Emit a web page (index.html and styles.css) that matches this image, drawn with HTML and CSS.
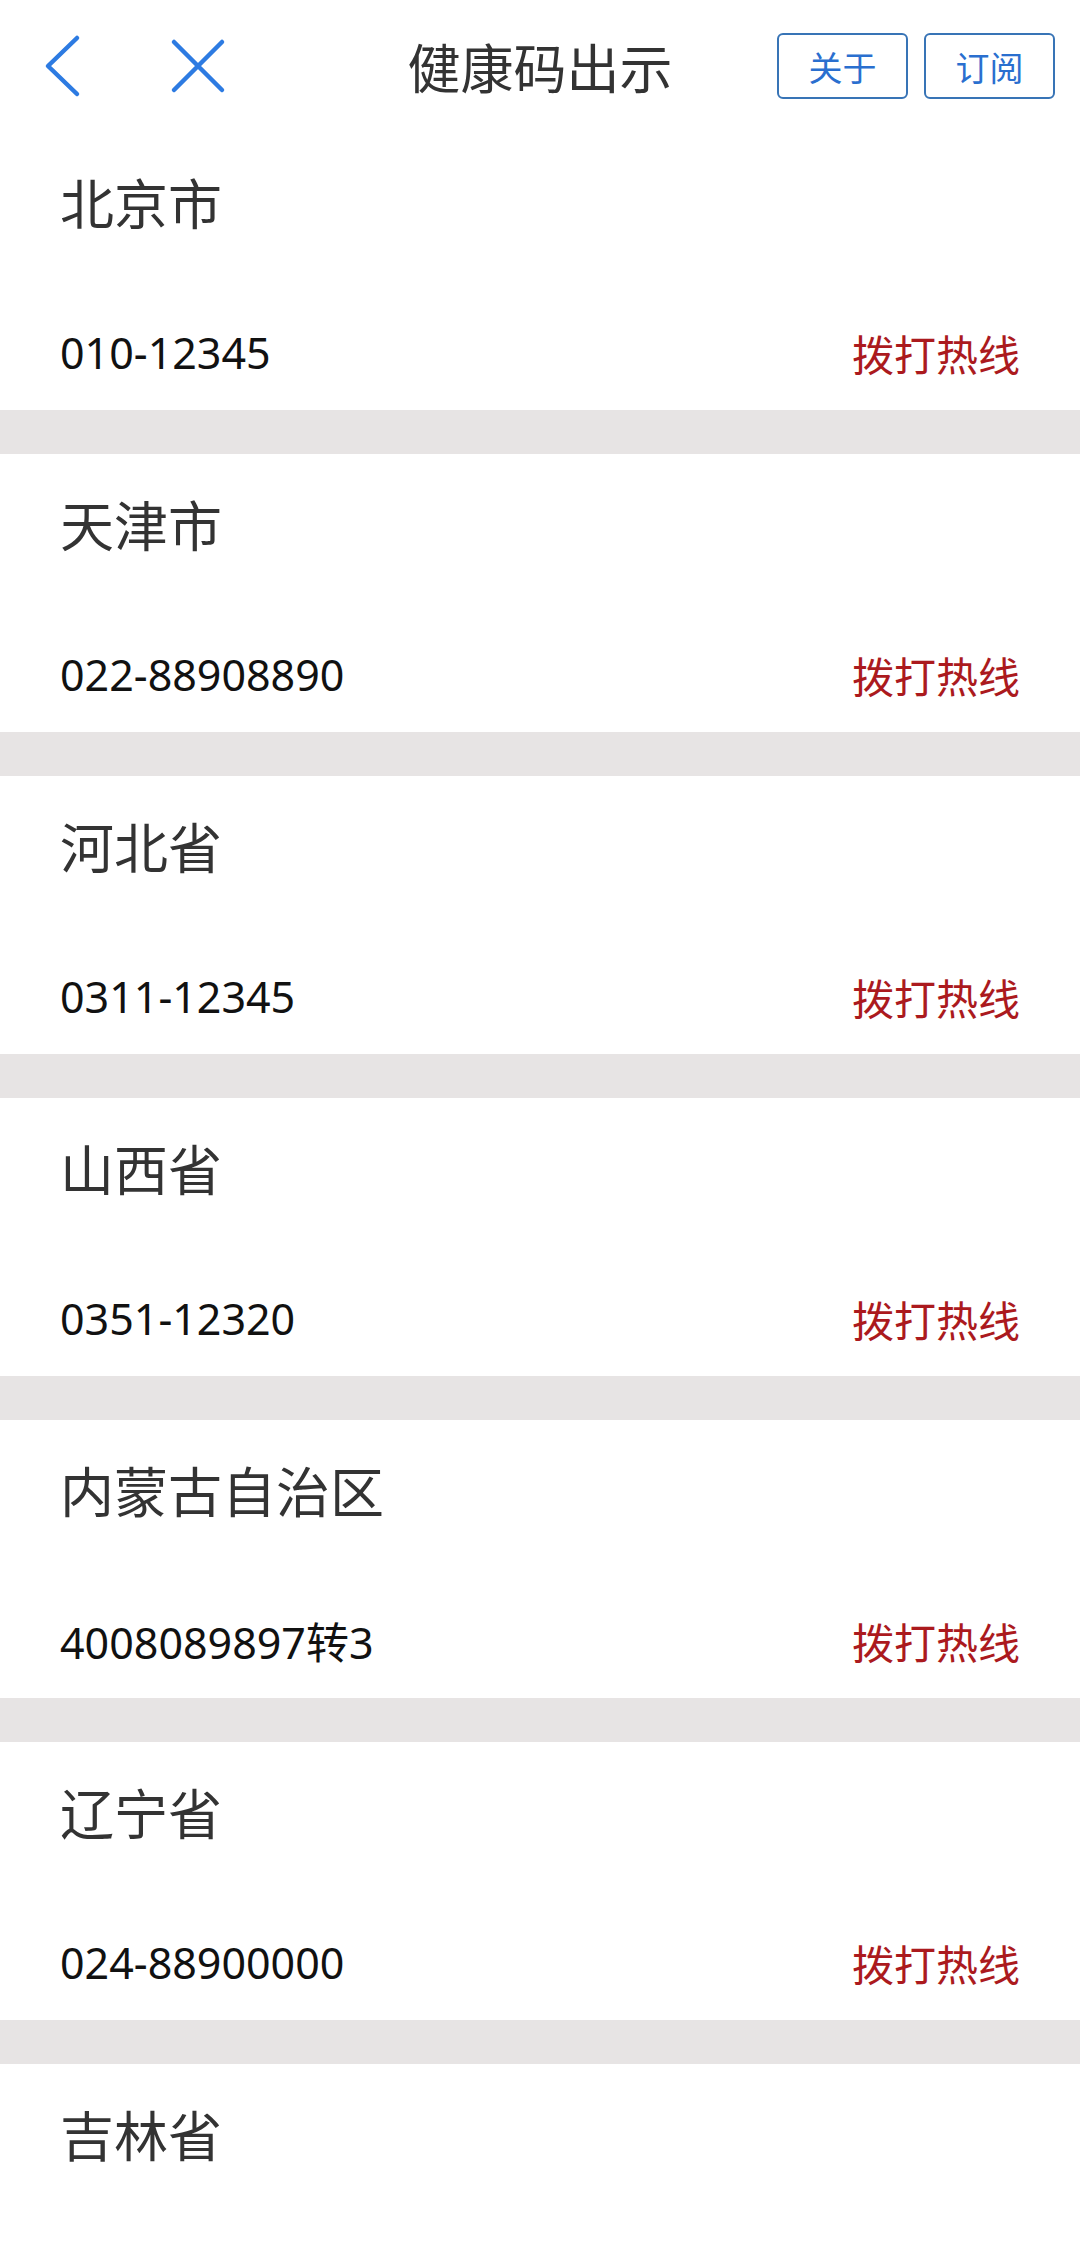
FILE: index.html
```html
<!DOCTYPE html>
<html>
<head lang="zh">
<meta charset="UTF-8">
<title>健康码出示</title>
<link rel="stylesheet" href="styles.css">
</head>
<body>
<div class="top">
    <div class="top-left">
        <svg class="ico-back" width="40" height="64" viewBox="0 0 40 64"><path d="M35 4 L6 32 L35 60" fill="none" stroke="#2d7be2" stroke-width="4.5" stroke-linecap="round" stroke-linejoin="round"/></svg>
        <svg class="ico-close" width="60" height="60" viewBox="0 0 60 60"><path d="M6 6 L54 54 M54 6 L6 54" fill="none" stroke="#2d7be2" stroke-width="4.5" stroke-linecap="round"/></svg>
    </div>
    <div class="title">健康码出示</div>
    <div class="top-right">
        <a class="btn">关于</a>
        <a class="btn">订阅</a>
    </div>
</div>

<ul class="list">
    <li>
        <div class="name">北京市</div>
        <div class="row"><span class="tel">010-12345</span><span class="call">拨打热线</span></div>
    </li>
    <li>
        <div class="name">天津市</div>
        <div class="row"><span class="tel">022-88908890</span><span class="call">拨打热线</span></div>
    </li>
    <li>
        <div class="name">河北省</div>
        <div class="row"><span class="tel">0311-12345</span><span class="call">拨打热线</span></div>
    </li>
    <li>
        <div class="name">山西省</div>
        <div class="row"><span class="tel">0351-12320</span><span class="call">拨打热线</span></div>
    </li>
    <li>
        <div class="name">内蒙古自治区</div>
        <div class="row"><span class="tel">4008089897转3</span><span class="call">拨打热线</span></div>
    </li>
    <li>
        <div class="name">辽宁省</div>
        <div class="row"><span class="tel">024-88900000</span><span class="call">拨打热线</span></div>
    </li>
    <li>
        <div class="name">吉林省</div>
    </li>
</ul>
</body>
</html>
```

FILE: styles.css
```css
*{margin:0;padding:0;list-style:none;box-sizing:border-box;}
html,body{background:#fff;overflow:hidden;}
body{font-family:"Noto Sans","Noto Sans CJK SC",sans-serif;}

.top{height:132px;display:grid;grid-template-columns:1fr auto 1fr;align-items:center;}
.top-left{justify-self:start;display:flex;align-items:center;padding-left:42px;gap:86px;}
.ico-back,.ico-close{display:block;}
.title{font-family:"Noto Sans CJK SC",sans-serif;font-size:53px;color:#333;line-height:1;}
.top-right{justify-self:end;display:flex;gap:16px;padding-right:25px;}
.btn{width:131px;height:66px;border:2px solid #3874b6;border-radius:6px;display:flex;align-items:center;justify-content:center;font-family:"Noto Sans CJK SC",sans-serif;font-size:34px;color:#2a6fcf;}

/* 每项 278 + 44 灰条 */
.list li{height:322px;padding:35px 60px 0;border-bottom:44px solid #e7e4e4;}
.list li:last-child{height:202px;border-bottom:0;}
.name{font-family:"Noto Sans CJK SC",sans-serif;font-size:54px;line-height:70px;color:#333;}
.row{display:flex;justify-content:space-between;align-items:center;height:60px;margin-top:85px;}
.tel{font-size:43px;color:#111;}
.call{font-family:"Noto Sans CJK SC",sans-serif;font-size:42px;color:#ab1a1e;}
```
